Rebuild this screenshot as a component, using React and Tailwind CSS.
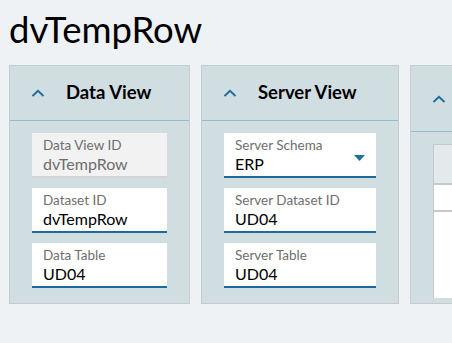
import React from "react";

const Chevron = () => (
  <svg width="14" height="8" viewBox="0 0 14 8" className="shrink-0">
    <polyline points="1.5,7 7,1.8 12.5,7" fill="none" stroke="#1f6f9c" strokeWidth="2" />
  </svg>
);

const Field = ({ label, value, disabled, dropdown }) => (
  <div
    className={
      "relative h-[45px] pl-[11px] pt-[4px] border-b-2 " +
      (disabled ? "bg-[#f2f2f2] border-[#d4d4d4]" : "bg-white border-[#1d6a9a]")
    }
  >
    <div className="text-[13.5px] leading-[17px] text-[#6e6e6e]">{label}</div>
    <div className={"text-[16px] leading-[20px] " + (disabled ? "text-[#6e6e6e]" : "text-black")}>
      {value}
    </div>
    {dropdown && (
      <svg width="11" height="6" viewBox="0 0 11 6" className="absolute right-[11px] top-[22px]">
        <polygon points="0,0 11,0 5.5,6" fill="#1f6f9c" />
      </svg>
    )}
  </div>
);

const Panel = ({ title, width, headerH, children }) => (
  <div
    className="shrink-0 bg-[#d0dde1] border border-[#c6cbcd] h-[239px] flex flex-col"
    style={{ width }}
  >
    <div
      className="flex items-center pl-[21px] border-b border-[#8fbfcf] shrink-0"
      style={{ height: headerH }}
    >
      <Chevron />
      {title && <span className="ml-[21px] text-[18.5px] font-bold text-black">{title}</span>}
    </div>
    {children}
  </div>
);

export default function App() {
  return (
    <div
      className="w-[452px] h-[343px] bg-[#eef2f5] overflow-hidden"
      style={{ fontFamily: "Lato, 'Noto Sans', sans-serif" }}
    >
      <div className="h-[65px] pl-[9px] pt-[8px]">
        <h1 className="text-[36.5px] leading-[42px] text-black">dvTempRow</h1>
      </div>
      <div className="flex gap-[11px] pl-[9px]">
        <Panel title="Data View" width="181px" headerH="55px">
          <div className="flex flex-col gap-[10px] px-[22px] pt-[12px]">
            <Field label="Data View ID" value="dvTempRow" disabled />
            <Field label="Dataset ID" value="dvTempRow" />
            <Field label="Data Table" value="UD04" />
          </div>
        </Panel>
        <Panel title="Server View" width="198px" headerH="55px">
          <div className="flex flex-col gap-[10px] px-[22px] pt-[12px]">
            <Field label="Server Schema" value="ERP" dropdown />
            <Field label="Server Dataset ID" value="UD04" />
            <Field label="Server Table" value="UD04" />
          </div>
        </Panel>
        <Panel width="300px" headerH="66px">
          <div className="pl-[22px] pt-[12px] pb-[5px] flex-1 flex flex-col">
            <div className="flex-1 bg-white border-l border-[#c8c8c8] flex flex-col">
              <div className="h-[41px] bg-[#e2eaec] border-t border-b-2 border-[#c8c8c8]" />
              <div className="h-[27px] border-b-2 border-[#c8c8c8]" />
            </div>
          </div>
        </Panel>
      </div>
    </div>
  );
}
